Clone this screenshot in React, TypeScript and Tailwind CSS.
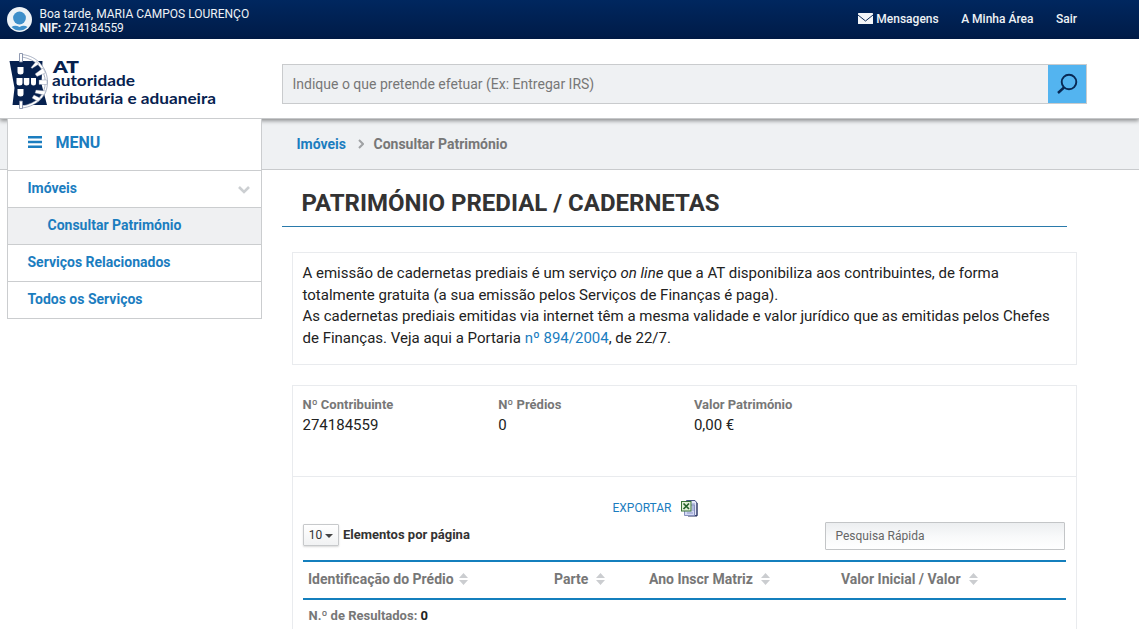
import React from "react";

const Sort = ({ className = "" }: { className?: string }) => (
  <svg className={className} width="9" height="12" viewBox="0 0 9 12" fill="#cbcdd0">
    <path d="M4.5 0L9 5H0zM4.5 12L9 7H0z" />
  </svg>
);

function Logo() {
  return (
    <svg width="212" height="60" viewBox="0 0 212 60" role="img">
      <path d="M4.500 8H37.500L36.500 31L42 52H7.500L9.500 35Z" fill="#06214f" />
      <path d="M17 1.500C33 3 42.500 16 42.500 29C42.500 42.500 33 53 17 55V53C31 50.500 40.300 42 40.300 29C40.300 17 31 6 17 4Z" fill="#fff" stroke="#7683a0" strokeWidth="0.600" />
      <path d="M31 8.500L34 11L27 15.500L26 14.500ZM38 15L40.500 20L32 23.500L30 21ZM34 27H42V31.500H34ZM31 37L41 38L39 42L30 40ZM29 42L36 45.500L33 48.500L27 45Z" fill="#fff" stroke="#7683a0" strokeWidth="0.400" />
      <path d="M14.500 0.500H17.500V9H14.500ZM14.500 48H17.500V55.500H14.500Z" fill="#fff" stroke="#7683a0" strokeWidth="0.8" />
      <g fill="#fff">
        <path d="M12.500 14H18.500V19Q18.500 21.500 15.500 21.500Q12.500 21.500 12.500 19Z" />
        <path d="M11.500 25H17.500V30Q17.500 32.500 14.500 32.500Q11.500 32.500 11.500 30ZM18.800 25H24.300V30Q24.300 32.500 21.600 32.500Q18.800 32.500 18.800 30ZM26 25H31V30Q31 32.500 28.500 32.500Q26 32.500 26 30Z" />
        <path d="M12.500 36H18.500V41Q18.500 43.500 15.500 43.500Q12.500 43.500 12.500 41Z" />
      </g>
      <g fill="#06214f" fontFamily="Lato, sans-serif" fontWeight="700">
        <text x="48" y="19.500" fontSize="16.500" fontWeight="800" textLength="26" lengthAdjust="spacingAndGlyphs">AT</text>
        <text x="47" y="32.500" fontSize="14.500" textLength="83" lengthAdjust="spacingAndGlyphs">autoridade</text>
        <text x="47" y="51" fontSize="14.500" textLength="164" lengthAdjust="spacingAndGlyphs">tributária e aduaneira</text>
      </g>
    </svg>
  );
}

function TopBar() {
  return (
    <div className="flex h-[39px] items-center bg-gradient-to-b from-[#00275f] to-[#001b47] pl-[7px] text-[12px] text-[#eef2f6]">
      <svg width="25" height="25" viewBox="0 0 25 25">
        <circle cx="12.500" cy="12.500" r="12.500" fill="#eef3f7" />
        <circle cx="12.500" cy="11" r="6.400" fill="#3e8fca" />
        <path d="M4.500 20Q8 17.500 12.500 20Q17 17.500 20.500 20Q17 23.500 12.500 23.500Q8 23.500 4.500 20Z" fill="#3e8fca" />
      </svg>
      <div className="ml-[7.500px] mt-[3px] leading-[14px]">
        <div>Boa tarde, MARIA CAMPOS LOURENÇO</div>
        <div className="tracking-[-0.1px]"><b>NIF:</b> 274184559</div>
      </div>
      <nav className="ml-auto mr-[62px] flex items-center pb-[2px] font-medium">
        <svg className="mr-[3px]" width="15" height="11" viewBox="0 0 15 11">
          <rect width="15" height="11" rx="0.500" fill="#f4f6f9" />
          <path d="M0 2L7.500 8L15 2" fill="none" stroke="#0b2856" strokeWidth="1" />
        </svg>
        <a>Mensagens</a>
        <a className="ml-[22.500px]">A Minha Área</a>
        <a className="ml-[22.500px]">Sair</a>
      </nav>
    </div>
  );
}

function Sidebar() {
  return (
    <aside className="relative z-20 -mt-[52px] ml-[7px] h-[201px] w-[255px] shrink-0 border border-[#cbcdcf] bg-white text-[14px] font-bold text-[#1b7dbf]">
      <div className="flex h-[51px] items-center pb-[3px] pl-[19.500px] text-[16px] font-bold">
        <svg className="mb-[2px] mr-[14px]" width="14" height="12" viewBox="0 0 14 12" fill="#1b7dbf">
          <path d="M0 0H14V2.400H0zM0 4.800H14V7.200H0zM0 9.600H14V12H0z" />
        </svg>
        MENU
      </div>
      <div className="flex h-[37px] items-center justify-between border-t border-[#cbcdcf] pb-[2px] pl-[19.500px] pr-[11px]">
        Imóveis
        <svg className="mt-[3px]" width="12" height="8" viewBox="0 0 12 8" fill="none" stroke="#cccfd2" strokeWidth="2.600">
          <path d="M1 1L6 6L11 1" />
        </svg>
      </div>
      <div className="flex h-[37px] items-center border-t border-[#cbcdcf] bg-[#eff0f2] pb-[2px] pl-[39.500px]">Consultar Património</div>
      <div className="flex h-[37px] items-center border-t border-[#cbcdcf] pb-[2px] pl-[19.500px]">Serviços Relacionados</div>
      <div className="flex h-[37px] items-center border-t border-[#cbcdcf] pb-[2px] pl-[19.500px]">Todos os Serviços</div>
    </aside>
  );
}

const columns = [
  { label: "Identificação do Prédio", cls: "w-[246px] pl-[5px]", gap: "ml-[5px]" },
  { label: "Parte", cls: "w-[95px] pl-[5px]", gap: "ml-[8px]" },
  { label: "Ano Inscr Matriz", cls: "w-[192px] pl-[5px]", gap: "ml-[8px]" },
  { label: "Valor Inicial / Valor", cls: "flex-1 pl-[5px]", gap: "ml-[8px]" },
];

const summary = [
  ["Nº Contribuinte", "274184559"],
  ["Nº Prédios", "0"],
  ["Valor Património", "0,00 €"],
];

export default function App() {
  return (
    <div className="h-[629px] w-[1139px] overflow-hidden whitespace-nowrap bg-white font-['Roboto',sans-serif] text-[#333]">
      <TopBar />
      <header className="relative z-10 flex h-[80px] border-b border-[#c6c8ca] bg-white pl-[5px] shadow-[0_2px_4px_rgba(0,0,0,0.4)]">
        <div className="pt-[14px]"><Logo /></div>
        <div className="ml-[65px] mt-[25px] flex h-[40px] w-[805px] border border-[#c9cbcd] bg-[#eff1f3]">
          <div className="flex-1 pl-[9.500px] text-[14px] leading-[38px] text-[#777]">Indique o que pretende efetuar (Ex: Entregar IRS)</div>
          <div className="flex w-[38px] items-center justify-center bg-[#53b4f0]">
            <svg width="22" height="22" viewBox="0 0 22 22" fill="none" stroke="#082854" strokeWidth="1.900">
              <circle cx="13" cy="9" r="7.300" />
              <path d="M8 14.500L2 20" strokeWidth="2.400" />
            </svg>
          </div>
        </div>
      </header>
      <div className="flex h-[51px] items-center border-b border-[#c9cbcd] bg-[#eff1f3] pl-[296.500px] text-[14px] font-bold">
        <span className="text-[#1b7dbf]">Imóveis</span>
        <svg className="ml-[12.500px] mr-[9px]" width="6" height="10" viewBox="0 0 6 10" fill="none" stroke="#a0a2a4" strokeWidth="2">
          <path d="M1 1L5 5L1 9" />
        </svg>
        <span className="text-[#777]">Consultar Património</span>
      </div>
      <div className="flex">
        <Sidebar />
        <main className="ml-[20px] w-[795px]">
          <h1 className="h-[57px] w-[785px] border-b border-[#2a7aab] pl-[19.500px] pt-[18px] text-[24px] font-bold leading-[30px]">PATRIMÓNIO PREDIAL / CADERNETAS</h1>
          <section className="ml-[10px] mt-[25px] h-[113px] w-[785px] border border-[#e9ebee] pl-[9.500px] pt-[10px] text-[15px] leading-[21.700px] text-[#222]">
            A emissão de cadernetas prediais é um serviço <i>on line</i> que a AT disponibiliza aos contribuintes, de forma<br />
            totalmente gratuita (a sua emissão pelos Serviços de Finanças é paga).<br />
            As cadernetas prediais emitidas via internet têm a mesma validade e valor jurídico que as emitidas pelos Chefes<br />
            de Finanças. Veja aqui a Portaria <a className="text-[#1b7dbf]">nº 894/2004</a>, de 22/7.
          </section>
          <section className="ml-[10px] mt-[20px] h-[260px] w-[785px] border border-[#e9ebee]">
            <div className="flex h-[91px] border-b border-[#e9ebee] pl-[9.500px] pt-[10px]">
              {summary.map(([k, v]) => (
                <div key={k} className="w-[195.700px]">
                  <div className="text-[13px] font-bold leading-[18px] text-[#777]">{k}</div>
                  <div className="text-[15px] leading-[22px] text-[#222]">{v}</div>
                </div>
              ))}
            </div>
            <div className="mt-[21px] flex h-[20px] items-center pl-[319.500px] text-[12px] text-[#1b7dbf]">
              EXPORTAR
              <svg className="ml-[9px]" width="17" height="17" viewBox="0 0 17 17">
                <path d="M5.500 0.500H14L16 3V15.500H6Z" fill="#e4e7fa" stroke="#4a5687" />
                <path d="M16 3V16H7" fill="none" stroke="#27315c" />
                <path d="M3.500 5H13.500V15.500H3.500Z" fill="#d3d8f5" stroke="#8690bd" />
                <path d="M11 4H14M11 6H14M11 8H13M11 10H13M6 13H12" stroke="#8d98c8" />
                <rect x="0.500" y="1.500" width="9.500" height="9.500" fill="#e3f0d9" stroke="#397338" />
                <path d="M2.500 3.500L8 9M8 3.500L2.500 9" stroke="#24622a" strokeWidth="1.700" />
              </svg>
            </div>
            <div className="flex h-[42px] pl-[10px]">
              <div className="mt-[6px] flex h-[22px] w-[36px] items-center justify-center gap-[3px] rounded-[1px] border border-[#c7c9cb] bg-gradient-to-b from-white to-[#f1f2f3] text-[12px] shadow-[0_1px_2px_rgba(0,0,0,0.15)]">
                10
                <svg className="mt-[2px]" width="8" height="4" viewBox="0 0 8 4" fill="#444"><path d="M0 0H8L4 4Z" /></svg>
              </div>
              <b className="ml-[4px] mt-[8px] text-[13px] leading-[18px]">Elementos por página</b>
              <div className="ml-auto mr-[11px] mt-[4px] h-[28px] w-[240px] rounded-[1px] border border-[#c3c5c7] bg-gradient-to-b from-[#eceef0] via-[#f8f9fa] to-white pl-[9.500px] text-[12px] leading-[26px] text-[#666]">Pesquisa Rápida</div>
            </div>
            <div className="ml-[10px] flex h-[40px] w-[763px] items-center border-y-2 border-[#147fbd] pb-[2px] text-[14px] font-bold text-[#777]">
              {columns.map((c) => (
                <div key={c.label} className={`flex items-center ${c.cls}`}>
                  {c.label}
                  <Sort className={c.gap} />
                </div>
              ))}
            </div>
            <div className="pl-[15.500px] pt-[7px] text-[13px] font-bold leading-[18px] text-[#777]">
              N.º de Resultados: <span className="text-[#222]">0</span>
            </div>
          </section>
        </main>
      </div>
    </div>
  );
}
